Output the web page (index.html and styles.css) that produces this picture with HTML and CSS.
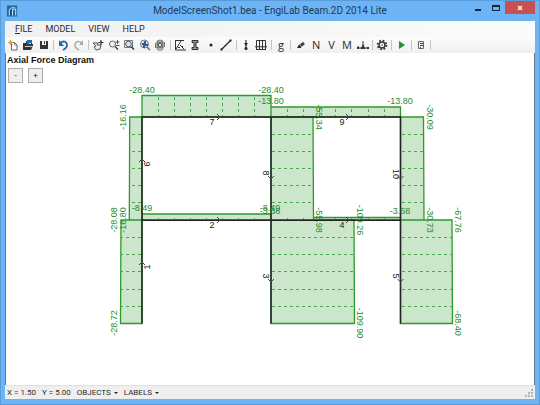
FILE: index.html
```html
<!DOCTYPE html>
<html lang="en">
<head>
<meta charset="utf-8">
<title>ModelScreenShot1.bea - EngiLab Beam.2D 2014 Lite</title>
<link rel="stylesheet" href="styles.css">
</head>
<body>
<div class="window">
  <header class="titlebar">
    <svg class="app-icon" viewBox="0 0 12 12" aria-hidden="true"><path fill="#1b6b9c" d="M0 0h11v12H0z"/><path fill="none" stroke="#d6edf9" d="M2.500 11V4.500M6 11V4h3.500v7M2.500 4.500 5 2.500h4"/><path fill="none" stroke="#0d3f61" d="M4 11V5.500h1.500"/></svg>
    <h1 class="title">ModelScreenShot1.bea - EngiLab Beam.2D 2014 Lite</h1>
    <div class="window-controls">
      <button class="control" aria-label="Minimize"><svg viewBox="0 0 8 8"><path fill="#15283a" d="M1 5h6v2H1z"/></svg></button>
      <button class="control" aria-label="Maximize"><svg viewBox="0 0 8 8"><path fill="#15283a" fill-rule="evenodd" d="M0 1h8v6H0zM1 3v3h6V3z"/></svg></button>
      <button class="control close" aria-label="Close"><svg viewBox="0 0 8 8"><path fill="none" stroke="#fff" stroke-width="1.300" d="m2 2 4 4m0-4L2 6"/></svg></button>
    </div>
  </header>
  <main class="client">
    <nav class="menu">
      <button class="menu-item"><u>F</u>ILE</button>
      <button class="menu-item">MODEL</button>
      <button class="menu-item">VIEW</button>
      <button class="menu-item">HELP</button>
    </nav>
    <div class="toolbar">
      <div class="tools">
        <button class="tool" aria-label="New"><svg viewBox="0 0 12 12"><path fill="#fff" stroke="#666" d="M4.500 3.500h3l2.500 2.500v5H4.500z"/><path fill="none" stroke="#777" stroke-width=".8" d="M7.500 3.500V6H10"/><path stroke="#d4a450" d="M3.500 1v5M1 3.500h5M1.700 1.700l3.500 3.500m0-3.500L1.700 5.200" stroke-width=".9"/></svg></button>
        <button class="tool" aria-label="Open"><svg viewBox="0 0 12 12"><path fill="#333" d="M1 4h3V2h6v3h1v2l-2 4H1z"/><path fill="#eee" d="M5 3h4v2H5z"/><path fill="#1970b8" d="M5 1h5v3H8L5 6z"/><path fill="#fff" d="M3 7h8l-.3.800H2.700z"/></svg></button>
        <button class="tool" aria-label="Save"><svg viewBox="0 0 12 12"><path fill="#333" d="M2 2h8l0 8H2z"/><path fill="#f5f5f5" d="M4 2h4v4H4z"/><path fill="#333" d="M6 2h1v3H6z"/></svg></button>
        <span class="separator"></span>
        <button class="tool" aria-label="Undo"><svg viewBox="0 0 12 12"><path fill="none" stroke="#1c69ad" stroke-width="1.800" d="M3 4c4-3 7-1 7 2 0 2-2 4-4 5"/><path fill="#1c69ad" d="M2 1v6h5z"/></svg></button>
        <button class="tool" aria-label="Redo"><svg viewBox="0 0 12 12"><path fill="none" stroke="#aaa" stroke-width="1.500" d="M9 4C5 1 2 3 2 6c0 2 2 4 4 5"/><path fill="#aaa" d="M10 1v5H6z"/></svg></button>
        <span class="separator"></span>
        <button class="tool" aria-label="Pan"><svg viewBox="0 0 12 12"><path fill="#eee" stroke="#555" d="M1 4h5l-1 2h4l-1 4-4 1-2-3 2-1z"/><path stroke="#333" stroke-width="1.200" d="M9 1v5M6.500 3.500h5"/></svg></button>
        <button class="tool" aria-label="Zoom in or out"><svg viewBox="0 0 12 12"><circle cx="4.500" cy="5" r="3" fill="#eef4f7" stroke="#666"/><path stroke="#444" stroke-width="1.600" d="m7 7.500 3 3"/><path stroke="#444" d="M9.500 1v4M7.500 3h4M8 6.500h3.500" stroke-width=".9"/></svg></button>
        <button class="tool" aria-label="Zoom window"><svg viewBox="0 0 12 12"><path fill="none" stroke="#777" d="M1.500 1.500h8v7h-8z"/><circle cx="5.500" cy="5" r="2.800" fill="#dceaf0" stroke="#555"/><path stroke="#444" stroke-width="1.700" d="m8 7.500 3 3"/></svg></button>
        <button class="tool" aria-label="Zoom all"><svg viewBox="0 0 12 12"><circle cx="5.500" cy="5" r="4" fill="#dce7f3" stroke="#777"/><path fill="#285d95" d="M3 4h2V2h2v3h2v2H6v2H4V6H3z"/><path stroke="#666" stroke-width="1.500" d="m8 8 3 3"/></svg></button>
        <button class="tool" aria-label="Redraw"><svg viewBox="0 0 12 12"><rect x="3" y="3" width="6" height="6" fill="#aaa" stroke="#555"/><circle cx="6" cy="6" r="1.700" fill="#eee" stroke="#555"/><path fill="none" stroke="#777" d="M3 2q3-2 6 0M3 10.500q3 1.500 6 0M1.500 4v5M10.500 3v5"/></svg></button>
        <span class="separator"></span>
        <button class="tool" aria-label="Materials"><svg viewBox="0 0 12 12"><path fill="none" stroke="#333" d="M1.500 1v10H12M1.500 1.500H10M2 10l5-8M6 6l4 4"/><path fill="#333" d="M8 7h1v1H8zM4 8h2v1H4z"/></svg></button>
        <button class="tool" aria-label="Sections"><svg viewBox="0 0 12 12"><path fill="#999" stroke="#222" stroke-width=".9" d="M3 1.500h6v2H7v5h2v2H3v-2h2v-5H3z"/></svg></button>
        <button class="tool" aria-label="Nodes"><svg viewBox="0 0 12 12"><circle cx="6" cy="6" r="1.500" fill="#222"/></svg></button>
        <button class="tool" aria-label="Elements"><svg viewBox="0 0 12 12"><path stroke="#222" stroke-width="1.300" d="m1.500 10.500 9-9"/><path fill="#222" d="M.5 9.500h2v2h-2zM9.500.5h2v2h-2z"/></svg></button>
        <span class="separator"></span>
        <button class="tool" aria-label="Nodal loads"><svg viewBox="0 0 12 12"><path stroke="#333" stroke-width="1.200" d="M6 1v9"/><path fill="#222" d="M4 4h4L6 7z"/><circle cx="6" cy="9.500" r="1.500" fill="#222"/></svg></button>
        <button class="tool" aria-label="Distributed loads"><svg viewBox="0 0 12 12"><path fill="none" stroke="#333" d="M1.500 10V1.500h9V10M4.500 2v8M7.500 2v8M1 10.500h10"/><path fill="#333" d="M0 7h3l-1.500 3zM3 7h3l-1.500 3zM6 7h3l-1.500 3zM9 7h3l-1.500 3z"/></svg></button>
        <span class="separator"></span>
        <button class="tool letter" aria-label="Gravity">g</button>
        <span class="separator"></span>
        <button class="tool" aria-label="Edit diagram"><svg viewBox="0 0 12 12"><path stroke="#444" stroke-width="3" d="m4 8 5-4"/><path fill="#222" d="m2 9 2-3 2 3z"/><path stroke="#aaa" d="m5 6 2 2"/></svg></button>
        <button class="tool letter">N</button>
        <button class="tool letter">V</button>
        <button class="tool letter">M</button>
        <button class="tool" aria-label="Reactions"><svg viewBox="0 0 12 12"><path fill="none" stroke="#333" d="M1 9h10M6 2v7"/><path fill="#333" d="m6 5 2.500 5h-5zM0 7.500h2v2.500H0zM10 8h2v2h-2z"/></svg></button>
        <span class="separator"></span>
        <button class="tool" aria-label="Settings"><svg viewBox="0 0 12 12"><circle cx="6" cy="6" r="4.500" fill="none" stroke="#333" stroke-width="1.600" stroke-dasharray="1.770"/><circle cx="6" cy="6" r="3" fill="none" stroke="#333" stroke-width="1.500"/><circle cx="6" cy="6" r=".8" fill="#444"/></svg></button>
        <span class="separator"></span>
        <button class="tool" aria-label="Run analysis"><svg viewBox="0 0 12 12"><path fill="#2c8c34" d="m3 2 6 4-6 4z"/></svg></button>
        <span class="separator"></span>
        <button class="tool" aria-label="Report"><svg viewBox="0 0 12 12"><path fill="#eee" stroke="#666" d="M3.500 2.500h5v7h-5z"/><path stroke="#444" d="M5 4.500h3M5 6.500h3M5 8.500h1"/></svg></button>
        <span class="separator"></span>
      </div>
    </div>
    <section class="canvas">
      <svg class="diagram" viewBox="5 53 530 332" preserveAspectRatio="xMidYMid meet" role="img" aria-label="Axial force diagram">
        <g class="force">
          <path d="M142 117V95.500H271V117zM271 117V107H400.500V117zM142 220V214H271V220zM271 220V217.500H400.500V220z"/>
          <path d="M142 117H129.700L129.300 220H142zM142 220H121L120.500 323.500H142z"/>
          <path d="M271 117H313L313.500 220H271zM400.500 117H423.500L424 220H400.500zM271 220H354L354.500 323.500H271zM400.500 220H452L452.500 323.500H400.500z"/>
        </g>
        <g class="hatch">
          <path d="M158.500 97V117M174.500 97V117M190.500 97V117M206.500 97V117M222.500 97V117M238.500 97V117M254.500 97V117"/>
          <path d="M287.500 109V117M303.500 109V117M319.500 109V117M335.500 109V117M351.500 109V117M368.500 109V117M384.500 109V117"/>
          <path d="M158.500 218V220M174.500 218V220M190.500 218V220M206.500 218V220M222.500 218V220M238.500 218V220M254.500 218V220M287.500 218V220M303.500 218V220M319.500 218V220M335.500 218V220M351.500 218V220M368.500 218V220M384.500 218V220"/>
          <path d="M141 134.500H130M141 151.500H130M141 168.500H130M141 185.500H130M141 202.500H130"/>
          <path d="M272 134.500H313M272 151.500H313M272 168.500H313M272 185.500H313M272 202.500H313"/>
          <path d="M402 134.500H423M402 151.500H423M402 168.500H423M402 185.500H423M402 202.500H423"/>
          <path d="M141 237.500H121M141 254.500H121M141 271.500H121M141 289.500H121M141 306.500H121"/>
          <path d="M272 237.500H354M272 254.500H354M272 271.500H354M272 289.500H354M272 306.500H354"/>
          <path d="M402 237.500H452M402 254.500H452M402 271.500H452M402 289.500H452M402 306.500H452"/>
        </g>
        <path class="frame" d="M142 323.500V117H400.500V323.500M271 117V323.500M142 220.300H400.500"/>
        <path class="arrows" d="M217 114l3 3-3 3M346 114l3 3-3 3M217 217l3 3-3 3M346 217l3 3-3 3M139 162l3-3 3 3M139 265l3-3 3 3M268 176l3 3 3-3M268 279l3 3 3-3M397.500 176l3 3 3-3M397.500 279l3 3 3-3"/>
        <g class="values">
          <text x="142" y="93">-28.40</text>
          <text x="271" y="93">-28.40</text>
          <text x="271" y="104">-13.80</text>
          <text x="400" y="104">-13.80</text>
          <text x="142" y="211">-8.49</text>
          <text x="270" y="211">-8.49</text>
          <text x="270" y="214">-3.68</text>
          <text x="400" y="214">-3.68</text>
          <text transform="translate(126 117) rotate(-90)">-16.16</text>
          <text transform="translate(117 220) rotate(-90)">-28.08</text>
          <text transform="translate(126 220) rotate(-90)">-16.80</text>
          <text transform="translate(117 323) rotate(-90)">-28.72</text>
          <text transform="translate(316 117) rotate(90)">-55.34</text>
          <text transform="translate(316 220) rotate(90)">-55.98</text>
          <text transform="translate(427 117) rotate(90)">-30.09</text>
          <text transform="translate(427 220) rotate(90)">-30.73</text>
          <text transform="translate(357 220) rotate(90)">-109.26</text>
          <text transform="translate(357 323) rotate(90)">-109.90</text>
          <text transform="translate(455 220) rotate(90)">-67.76</text>
          <text transform="translate(455 323) rotate(90)">-68.40</text>
        </g>
        <g class="members">
          <text x="212" y="125">7</text>
          <text x="342" y="125">9</text>
          <text x="212" y="228">2</text>
          <text x="342" y="228">4</text>
          <text transform="translate(150 164) rotate(-90)">6</text>
          <text transform="translate(150 267) rotate(-90)">1</text>
          <text transform="translate(263 173) rotate(90)">8</text>
          <text transform="translate(263 276) rotate(90)">3</text>
          <text transform="translate(393 174) rotate(90)">10</text>
          <text transform="translate(393 276) rotate(90)">5</text>
        </g>
      </svg>
      <div class="overlay">
        <h2 class="diagram-title">Axial Force Diagram</h2>
        <div class="scale">
          <button class="scale-button" aria-label="Decrease scale">-</button>
          <button class="scale-button" aria-label="Increase scale">+</button>
        </div>
      </div>
    </section>
    <footer class="status">
      <span>X = 1.50</span>
      <span>Y = 5.00</span>
      <button class="dropdown">OBJECTS</button>
      <button class="dropdown">LABELS</button>
      <svg class="grip" viewBox="0 0 8 8" aria-hidden="true"><path fill="#b4b4b4" d="M6 0h2v2H6zM3 3h2v2H3zM6 3h2v2H6zM0 6h2v2H0zM3 6h2v2H3zM6 6h2v2H6z"/></svg>
    </footer>
  </main>
</div>
</body>
</html>
```
FILE: styles.css
```css
* {
  box-sizing: border-box;
}

body {
  margin: 0;
  font-family: Roboto, "Noto Sans", sans-serif;
  color: #2b2b2b;
}

button {
  padding: 0;
  border: 0;
  background: none;
  color: inherit;
  font: inherit;
}

.window {
  display: flex;
  flex-direction: column;
  height: 100vh;
  padding: 0 4px 5px;
  border: 1px solid #5b9bd8;
  background: #6db4f7;
}

.titlebar {
  display: grid;
  grid-template-columns: 60px 1fr 60px;
  align-items: start;
  height: 20px;
}

.app-icon {
  width: 11px;
  height: 12px;
  margin: 4px 2px;
}

.title {
  margin: 0;
  font-size: 10px;
  line-height: 19px;
  font-weight: 400;
  text-align: center;
  white-space: nowrap;
  color: #1d3a56;
}

.window-controls {
  display: flex;
  justify-content: flex-end;
}

.control {
  display: grid;
  flex: 0 0 18px;
  place-items: center;
  height: 13px;
}

.control svg {
  width: 8px;
  height: 8px;
}

.close {
  flex-basis: 30px;
  background: #c75050;
}

.client {
  display: flex;
  flex: 1;
  flex-direction: column;
  min-height: 0;
  background: #fff;
}

.menu {
  display: flex;
  gap: 13px;
  padding: 0 10px;
  background: linear-gradient(90deg, #f1f1f1, #fbfbfb);
  font-size: 9px;
  line-height: 16px;
}

.toolbar {
  height: 16px;
  background: linear-gradient(#fcfcfc, #f0f0f0);
}

.tools {
  display: flex;
  align-items: center;
  max-width: 428px;
  height: 16px;
}

.tool {
  display: grid;
  flex: 1;
  place-items: center;
  height: 16px;
}

.tool svg {
  width: 12px;
  height: 12px;
}

.letter {
  font-family: "Open Sans", sans-serif;
  font-size: 11px;
  line-height: 14px;
}

.separator {
  flex: 0 0 4px;
  height: 10px;
  background: linear-gradient(#c4c4c4, #c4c4c4) center / 1px 100% no-repeat;
}

.canvas {
  position: relative;
  flex: 1;
  min-height: 0;
  box-shadow: inset 1px 0 #64788c, inset -1px 0 #64788c;
}

.diagram {
  position: absolute;
  inset: 0;
  width: 100%;
  height: 100%;
  font-family: "Liberation Sans", sans-serif;
  font-size: 9px;
  text-anchor: middle;
}

.force {
  fill: #cce6cc;
  stroke: #2d992d;
  stroke-width: 1.3;
}

.hatch {
  fill: none;
  stroke: #4ea64e;
  stroke-dasharray: 3 3;
}

.frame {
  fill: none;
  stroke: #222;
  stroke-width: 1.5;
}

.arrows {
  fill: none;
  stroke: #444;
}

.values {
  fill: #258c2d;
}

.members {
  fill: #222;
}

.overlay {
  position: absolute;
  top: 0;
  left: 0;
  padding: 1px 2px;
}

.diagram-title {
  margin: 0;
  font: bold 9px/12px "Liberation Sans", sans-serif;
  color: #111;
}

.scale {
  display: flex;
  gap: 5px;
  padding: 2px 1px;
}

.scale-button {
  width: 15px;
  height: 15px;
  border: 1px solid #adadad;
  background: #eee;
  font-size: 8px;
  line-height: 12px;
}

.status {
  display: flex;
  align-items: center;
  gap: 6px;
  height: 14px;
  padding: 0 2px;
  border-top: 1px solid #e0e0e0;
  background: #efefef;
  font-size: 8px;
  line-height: 12px;
}

.dropdown {
  display: flex;
  align-items: center;
  gap: 3px;
}

.dropdown::after {
  content: "";
  border: 2px solid transparent;
  border-top-color: #222;
  border-bottom: 0;
}

.grip {
  width: 8px;
  height: 8px;
  margin-left: auto;
}
```
